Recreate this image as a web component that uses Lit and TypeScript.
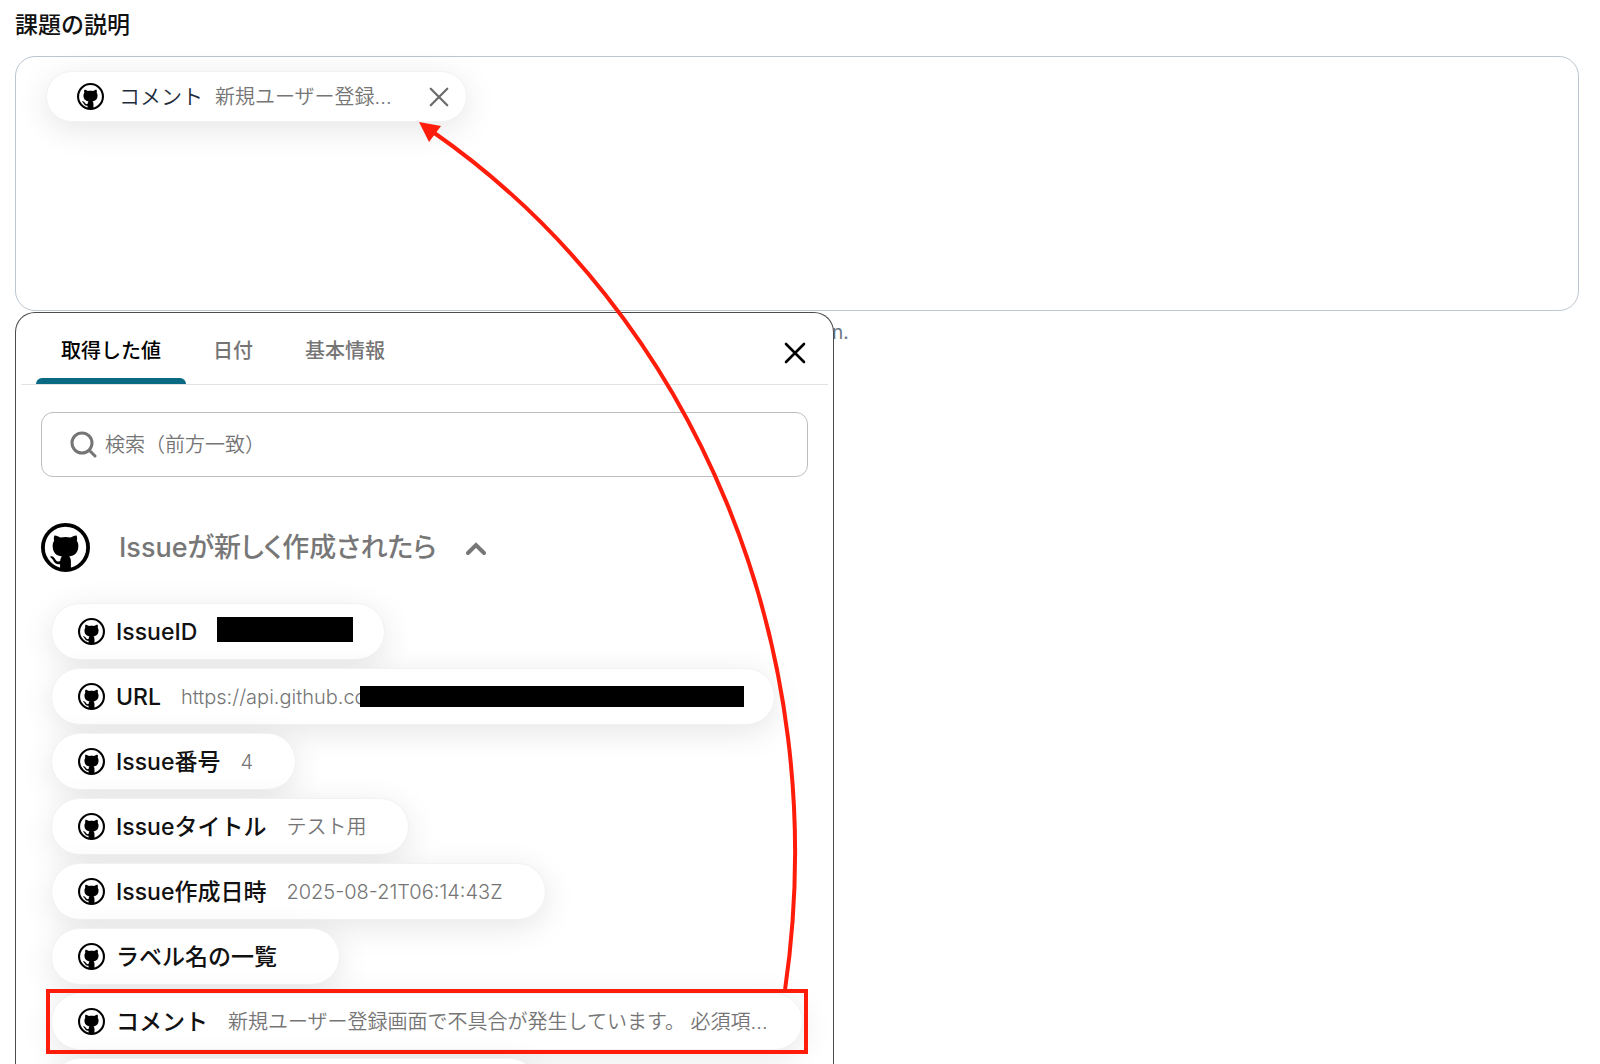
import { LitElement, html, svg, css, nothing } from "lit";
import { customElement, property, state } from "lit/decorators.js";

interface OutputValue {
  label: string;
  value?: string;
  maskWidth?: number;
  tallMask?: boolean;
  picked?: boolean;
}

const TABS = ["取得した値", "日付", "基本情報"];

const VALUES: OutputValue[] = [
  { label: "IssueID", maskWidth: 136, tallMask: true },
  { label: "URL", value: "https://api.github.co", maskWidth: 384 },
  { label: "Issue番号", value: "4" },
  { label: "Issueタイトル", value: "テスト用" },
  { label: "Issue作成日時", value: "2025-08-21T06:14:43Z" },
  { label: "ラベル名の一覧", value: "" },
  {
    label: "コメント",
    value: "新規ユーザー登録画面で不具合が発生しています。 必須項...",
    picked: true,
  },
];

const crossPath = svg`<path d="M2 2 L20 20 M20 2 L2 20" fill="none" stroke="currentColor" stroke-linecap="round" />`;

@customElement("octo-mark")
export class OctoMark extends LitElement {
  static styles = css`
    :host {
      display: block;
      flex: none;
      width: 27px;
      height: 27px;
      color: #000;
    }
    .mark {
      display: block;
      width: 100%;
      height: 100%;
    }
  `;

  render() {
    return html`
      <svg class="mark" viewBox="0 0 49 49" aria-hidden="true">
        <circle cx="24.5" cy="24.5" r="22.6" fill="none" stroke="currentColor" stroke-width="3.8" />
        <path
          fill="currentColor"
          d="M13.4 12.4 C15.4 12.2 17.8 13.4 19.6 14.6 C22.6 13.8 26.4 13.8 29.4 14.6 C31.2 13.4 33.6 12.2 35.6 12.4 C36.3 14.2 36.3 16.2 35.8 17.8 C37 19.4 37.5 21.4 37.3 23.8 C37 30 33.6 32.8 28.2 33.5 C29.4 34.7 29.9 36.1 29.9 38 V46 L24.5 47.4 L19.1 46 V41.2 C15.6 41.7 13.6 40.3 12.4 37.8 C11.7 36.4 10.9 35.4 9.7 34.6 C8.9 34 9.3 33.2 10.3 33.3 C12.2 33.5 13.4 34.8 14.4 36.4 C15.6 38.3 17 38.8 19.2 38.1 C19.3 36.2 19.8 34.7 20.9 33.5 C15.4 32.8 12 30 11.7 23.8 C11.5 21.4 12 19.4 13.2 17.8 C12.7 16.2 12.7 14.2 13.4 12.4 Z"
        />
      </svg>
    `;
  }
}

@customElement("value-picker")
export class ValuePicker extends LitElement {
  @property({ attribute: false }) values: OutputValue[] = [];
  @state() private activeTab = 0;
  @state() private open = true;

  static styles = css`
    :host {
      display: block;
      box-sizing: border-box;
      background: #fff;
      border: 1px solid #4c4c4c;
      border-bottom: 0;
      border-radius: 20px 20px 0 0;
      min-height: 100%;
    }
    button,
    input {
      font: inherit;
      color: inherit;
      background: none;
      border: 0;
      margin: 0;
      padding: 0;
    }
    button {
      cursor: pointer;
    }
    .top {
      display: flex;
      align-items: stretch;
      justify-content: space-between;
      height: 71px;
      margin: 0 5px;
      padding: 0 21px 0 15px;
      border-bottom: 1px solid #e2e2e2;
    }
    .tabs {
      display: flex;
      gap: 2px;
    }
    .tab {
      padding: 10px 25px 0;
      font-size: 20px;
      font-weight: 500;
      line-height: 24px;
      color: #757575;
      display: grid;
      grid-template-rows: 1fr 6px;
      align-items: center;
      white-space: nowrap;
    }
    .tab.active {
      color: #000;
    }
    .bar {
      height: 6px;
      margin: 0 -25px;
      border-radius: 6px 6px 0 0;
    }
    .active .bar {
      background: #0b6a83;
    }
    .close {
      align-self: center;
      width: 24px;
      height: 24px;
      margin-top: 8px;
      color: #000;
    }
    .close svg {
      display: block;
      width: 24px;
      height: 24px;
    }
    .search {
      display: flex;
      align-items: center;
      gap: 8px;
      height: 63px;
      margin: 27px 25px 0;
      padding: 0 27px;
      border: 1px solid #bdbdbd;
      border-radius: 12px;
      color: #757575;
    }
    .search svg {
      flex: none;
      width: 28px;
      height: 28px;
    }
    .search input {
      flex: 1;
      min-width: 0;
      height: 32px;
      font-size: 20px;
      font-weight: 350;
      outline: 0;
    }
    .search input::placeholder {
      color: #757575;
      opacity: 1;
    }
    .group {
      display: flex;
      align-items: center;
      gap: 29px;
      margin: 46px 25px 31px;
      color: #777;
      font-size: 27px;
      font-weight: 500;
      line-height: 49px;
      font-feature-settings: "palt";
    }
    .group octo-mark {
      width: 49px;
      height: 49px;
    }
    .group svg {
      width: 20px;
      height: 14px;
    }
    .list {
      display: flex;
      flex-direction: column;
      align-items: flex-start;
      gap: 8px;
      margin: 0;
      padding: 0 30px 0 35px;
      list-style: none;
    }
    .item {
      position: relative;
      max-width: 100%;
    }
    .pill {
      display: flex;
      align-items: center;
      box-sizing: border-box;
      height: 57px;
      max-width: 100%;
      padding: 0 42px 0 26px;
      border: 1px solid #f2f2f2;
      border-radius: 29px;
      background: #fff;
      box-shadow: 0 7px 32px rgba(0, 0, 0, 0.1);
      white-space: nowrap;
    }
    .label {
      margin: 0 20px 0 11px;
      font-size: 23px;
      font-weight: 500;
      line-height: 32px;
      color: #111;
    }
    .value {
      font-size: 20px;
      font-weight: 350;
      line-height: 32px;
      color: #757575;
    }
    .mask {
      position: relative;
      height: 21px;
      margin: 0 -12px 0 -6px;
      background: #000;
    }
    .mask.tall {
      height: 25px;
      margin: 0 -11px 4px 0;
    }
    .frame {
      position: absolute;
      inset: -4px -5px -4px -5px;
      border: 4px solid #ff1c0a;
    }
    .next {
      width: 487px;
    }
  `;

  private renderItem(v: OutputValue) {
    return html`
      <li class="item">
        <button class="pill" type="button">
          <octo-mark></octo-mark>
          <span class="label">${v.label}</span>
          ${v.value ? html`<span class="value">${v.value}</span>` : nothing}
          ${v.maskWidth
            ? html`<span class=${v.tallMask ? "mask tall" : "mask"} style="width:${v.maskWidth}px"></span>`
            : nothing}
        </button>
        ${v.picked ? html`<span class="frame"></span>` : nothing}
      </li>
    `;
  }

  render() {
    return html`
      <div class="top">
        <div class="tabs" role="tablist">
          ${TABS.map(
            (t, i) => html`
              <button
                class=${i === this.activeTab ? "tab active" : "tab"}
                type="button"
                role="tab"
                aria-selected=${i === this.activeTab}
                @click=${() => (this.activeTab = i)}
              >
                <span>${t}</span><span class="bar"></span>
              </button>
            `,
          )}
        </div>
        <button class="close" type="button" aria-label="閉じる">
          <svg viewBox="-1 -1 24 24" stroke-width="2.6">${crossPath}</svg>
        </button>
      </div>
      <label class="search">
        <svg viewBox="0 0 28 28" fill="none" stroke="currentColor" stroke-width="3" aria-hidden="true">
          <circle cx="13" cy="12" r="10" />
          <path d="M20.5 19.5 L26 25" stroke-linecap="round" />
        </svg>
        <input type="text" placeholder="検索（前方一致）" aria-label="検索（前方一致）" />
      </label>
      <button
        class="group"
        type="button"
        aria-expanded=${this.open}
        @click=${() => (this.open = !this.open)}
      >
        <octo-mark></octo-mark>
        <span>Issueが新しく作成されたら</span>
        <svg viewBox="0 0 20 14" fill="none" stroke="currentColor" stroke-width="4" aria-hidden="true">
          <path d="M2 12 L10 4 L18 12" stroke-linecap="round" />
        </svg>
      </button>
      ${this.open
        ? html`
            <ul class="list">
              ${this.values.map((v) => this.renderItem(v))}
              <li class="item"><div class="pill next"></div></li>
            </ul>
          `
        : nothing}
    `;
  }
}

@customElement("app-root")
export class AppRoot extends LitElement {
  @state() private attached = true;

  static styles = css`
    :host {
      display: block;
      position: relative;
      box-sizing: border-box;
      height: 100vh;
      overflow: hidden;
      padding: 9px 21px 0 15px;
      background: #fff;
      font-family: Inter, "Noto Sans CJK JP", sans-serif;
      color: #111;
    }
    .title {
      margin: 0 0 15px;
      font-size: 23px;
      font-weight: 500;
      line-height: 32px;
    }
    .field {
      box-sizing: border-box;
      height: 255px;
      padding: 14px 30px;
      border: 1px solid #bcc5d1;
      border-radius: 20px;
    }
    .chip {
      display: inline-flex;
      align-items: center;
      box-sizing: border-box;
      height: 51px;
      padding: 0 16px 0 30px;
      border: 1px solid #f2f2f2;
      border-radius: 26px;
      background: #fff;
      box-shadow: 0 7px 32px rgba(0, 0, 0, 0.1);
      font-size: 20px;
      font-weight: 350;
      line-height: 32px;
      white-space: nowrap;
    }
    .name {
      margin: 0 12px 0 15px;
      font-size: 21px;
      color: #1d2b3a;
    }
    .text {
      color: #757575;
    }
    .remove {
      width: 22px;
      height: 22px;
      margin-left: 36px;
      padding: 0;
      border: 0;
      background: none;
      color: #6b6b6b;
      cursor: pointer;
    }
    .remove svg {
      display: block;
      width: 22px;
      height: 22px;
    }
    .below {
      display: flex;
      align-items: flex-start;
      height: 100%;
      margin-top: 1px;
    }
    value-picker {
      position: relative;
      z-index: 1;
      flex: 0 1 819px;
      min-width: 0;
    }
    .hint {
      margin: 5px 0 0 -2px;
      font-size: 19px;
      line-height: 32px;
      color: #6b7684;
    }
    .arrow {
      position: absolute;
      z-index: 2;
      left: 0;
      top: 0;
      width: 840px;
      height: 1000px;
      pointer-events: none;
    }
  `;

  render() {
    return html`
      <h2 class="title" id="field-title">課題の説明</h2>
      <div class="field" role="group" aria-labelledby="field-title">
        ${this.attached
          ? html`
              <div class="chip">
                <octo-mark></octo-mark>
                <span class="name">コメント</span>
                <span class="text">新規ユーザー登録...</span>
                <button
                  class="remove"
                  type="button"
                  aria-label="削除"
                  @click=${() => (this.attached = false)}
                >
                  <svg viewBox="-1 -1 24 24" stroke-width="2.4">${crossPath}</svg>
                </button>
              </div>
            `
          : nothing}
      </div>
      <div class="below">
        <value-picker .values=${VALUES}></value-picker>
        <p class="hint">n.</p>
      </div>
      <svg class="arrow" viewBox="0 0 840 1000" aria-hidden="true">
        <path
          d="M433 132 C696 315 835 650 785 990"
          fill="none"
          stroke="#ff1c0a"
          stroke-width="4"
        />
        <path d="M419 122 L441 126 L429 142 Z" fill="#ff1c0a" />
      </svg>
    `;
  }
}
